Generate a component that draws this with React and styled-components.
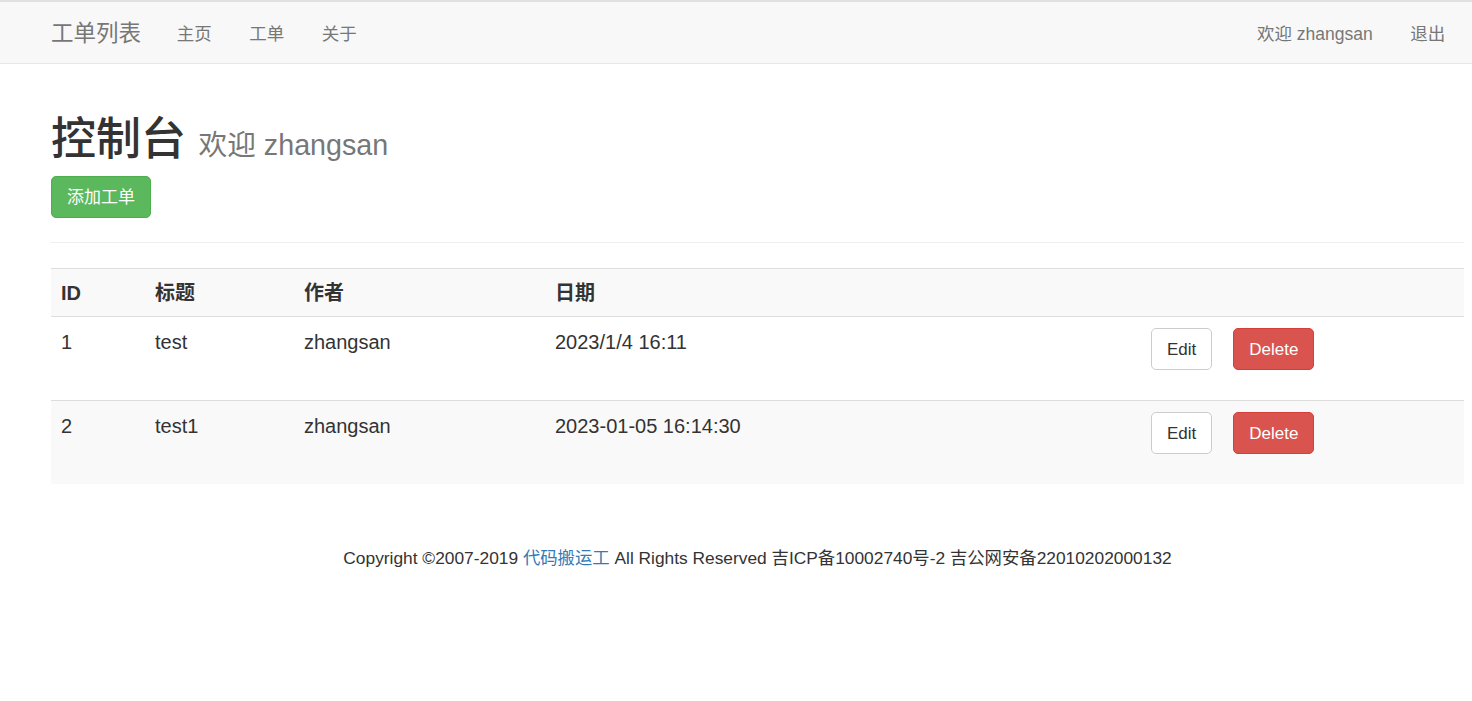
import React from "react"
import styled, { createGlobalStyle } from "styled-components"

const GlobalStyle = createGlobalStyle`
  body {
    margin: 0;
    background: #fff;
    color: #333;
    font-family: "Liberation Sans", "Noto Sans CJK SC", sans-serif;
    font-size: 17.5px;
    line-height: 1.42857;
  }
  * { box-sizing: border-box; }
`

const Navbar = styled.nav`
  display: flex;
  justify-content: space-between;
  height: 64px;
  padding: 3px 8px 0 32px;
  background: #f8f8f8;
  border-top: 2px solid #e1e1e1;
  border-bottom: 1px solid #e7e7e7;
`

const NavGroup = styled.div`
  display: flex;
  align-items: center;
`

const Brand = styled.a`
  padding: 0 17px 0 19px;
  font-size: 22.5px;
  color: #777;
  text-decoration: none;
`

const NavLink = styled.a`
  padding: 0 18.75px;
  font-size: 17.5px;
  color: #777;
  text-decoration: none;
`

const Container = styled.main`
  padding: 0 8px 0 51px;
`

const PageHeader = styled.div`
  margin: 50px 0 25px;
  padding-bottom: 24px;
  border-bottom: 1px solid #eee;
`

const Title = styled.h1`
  margin: 0 0 12.5px;
  padding-top: 2px;
  height: 49.5px;
  font-size: 45px;
  font-weight: 500;
  line-height: 47.5px;
  color: #333;

  small {
    font-size: 28.7px;
    font-weight: normal;
    line-height: 1;
    color: #777;
  }
`

const Button = styled.button`
  display: inline-block;
  padding: 7.5px 15px;
  font-family: inherit;
  font-size: 17px;
  line-height: 25px;
  border-radius: 5px;
  border: 1px solid ${(props) => props.border};
  background: ${(props) => props.bg};
  color: ${(props) => props.color};
  cursor: pointer;
`

const Table = styled.table`
  width: 100%;
  border-collapse: collapse;
  table-layout: fixed;
  margin-bottom: 25px;

  tr:nth-of-type(odd) {
    background: #f9f9f9;
  }
`

const Th = styled.th`
  width: ${(props) => props.w || "auto"};
  padding: 12px 10px 10px;
  text-align: left;
  font-size: 20px;
  font-weight: bold;
  line-height: 25px;
  border-top: 1px solid #ddd;
  border-bottom: 1px solid #ddd;
`

const Td = styled.td`
  padding: 11px 10px 10px;
  vertical-align: top;
  font-size: 20px;
  line-height: 28px;
  border-top: 1px solid #ddd;
`

const Actions = styled.div`
  display: flex;
  gap: 21px;
  margin: 0 0 20px;
`

const Footer = styled.footer`
  padding-top: 37px;
  text-align: center;
  font-size: 17.35px;

  a {
    color: #337ab7;
    text-decoration: none;
  }
`

const tickets = [
  { id: 1, title: "test", author: "zhangsan", date: "2023/1/4 16:11" },
  { id: 2, title: "test1", author: "zhangsan", date: "2023-01-05 16:14:30" },
]

const App = () => {
  return (
    <>
      <GlobalStyle />
      <Navbar>
        <NavGroup>
          <Brand href="#">工单列表</Brand>
          <NavLink href="#">主页</NavLink>
          <NavLink href="#">工单</NavLink>
          <NavLink href="#">关于</NavLink>
        </NavGroup>
        <NavGroup>
          <NavLink href="#">欢迎 zhangsan</NavLink>
          <NavLink href="#">退出</NavLink>
        </NavGroup>
      </Navbar>
      <Container>
        <PageHeader>
          <Title>
            控制台 <small>欢迎 zhangsan</small>
          </Title>
          <Button bg="#5cb85c" border="#4cae4c" color="#fff">
            添加工单
          </Button>
        </PageHeader>
        <Table>
          <tbody>
            <tr>
              <Th w="94px">ID</Th>
              <Th w="149px">标题</Th>
              <Th w="251px">作者</Th>
              <Th w="596px">日期</Th>
              <Th />
            </tr>
            {tickets.map((t) => (
              <tr key={t.id}>
                <Td>{t.id}</Td>
                <Td>{t.title}</Td>
                <Td>{t.author}</Td>
                <Td>{t.date}</Td>
                <Td>
                  <Actions>
                    <Button bg="#fff" border="#ccc" color="#333">
                      Edit
                    </Button>
                    <Button bg="#d9534f" border="#d43f3a" color="#fff">
                      Delete
                    </Button>
                  </Actions>
                </Td>
              </tr>
            ))}
          </tbody>
        </Table>
        <Footer>
          Copyright ©2007-2019 <a href="#">代码搬运工</a> All Rights Reserved
          吉ICP备10002740号-2 吉公网安备22010202000132
        </Footer>
      </Container>
    </>
  )
}

export default App
